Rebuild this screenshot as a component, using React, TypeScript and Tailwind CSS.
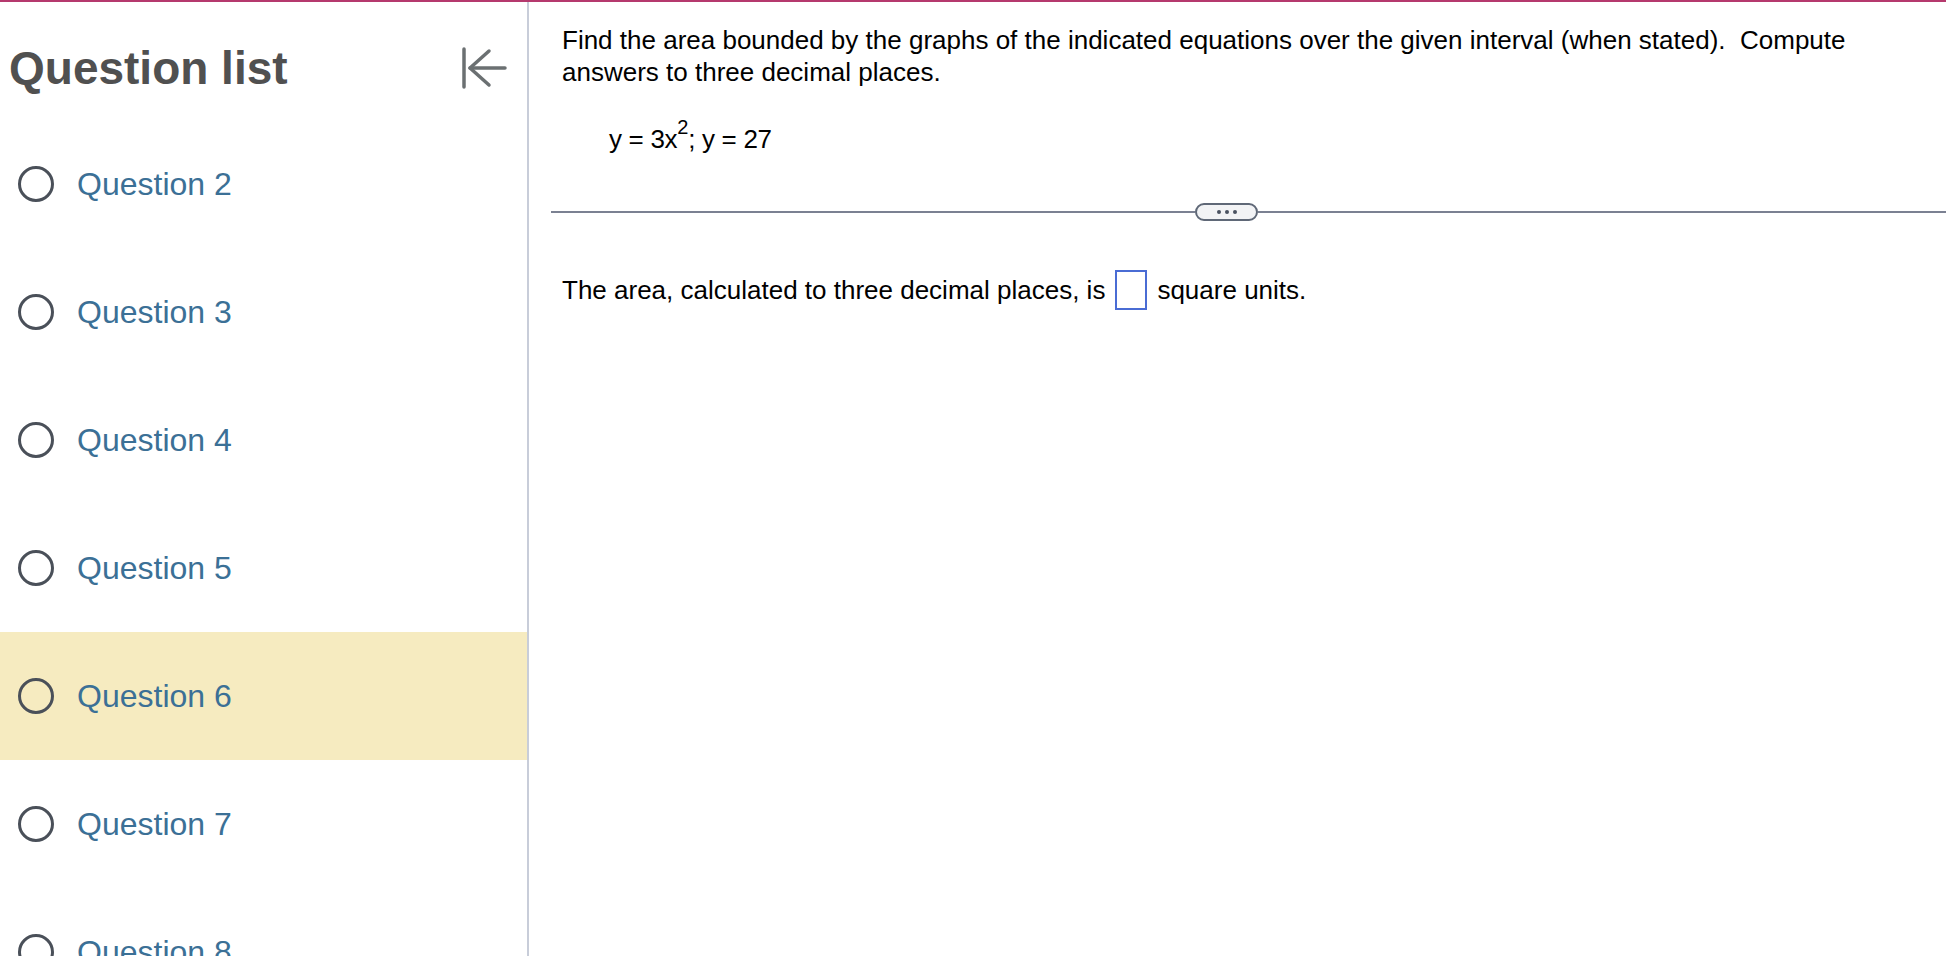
import React from "react";

const questions = [2, 3, 4, 5, 6, 7, 8];

function CollapseIcon() {
  return (
    <svg width="46" height="44" viewBox="0 0 46 44" fill="none" stroke="#6b7072" strokeWidth="3.5" strokeLinecap="round" strokeLinejoin="round">
      <line x1="3" y1="3" x2="3" y2="41" />
      <line x1="9" y1="22" x2="44" y2="22" />
      <polyline points="28,5 9,22 28,39" />
    </svg>
  );
}

export default function App() {
  return (
    <div className="flex h-[956px] w-[1946px] flex-col overflow-hidden bg-white" style={{ fontFamily: "'Liberation Sans', Arial, sans-serif" }}>
      <div className="h-[2px] shrink-0 bg-[#b5396d]" />
      <div className="flex min-h-0 flex-1">
        <aside className="w-[529px] shrink-0 overflow-hidden border-r-2 border-[#c8cdd9]">
          <div className="flex h-[118px] items-center justify-between pl-[9px] pr-[20px] pt-[14px]">
            <h1 className="text-[46px] font-bold text-[#505050]">Question list</h1>
            <button className="flex items-center">
              <CollapseIcon />
            </button>
          </div>
          {questions.map((q) => (
            <div key={q} className={`flex h-[128px] shrink-0 items-center gap-[23px] pl-[18px] ${q === 6 ? "bg-[#f6ebc0]" : ""}`}>
              <span className="h-[36px] w-[36px] shrink-0 rounded-full border-[3px] border-[#4a5059]" />
              <span className="text-[32px] text-[#3b7096]">Question {q}</span>
            </div>
          ))}
        </aside>

        <main className="min-w-0 flex-1 pt-[22px] text-black">
          <div className="pl-[33px] pr-[80px] text-[26px] leading-[32px]">
            <p>
              Find the area bounded by the graphs of the indicated equations over the given interval (when stated).&nbsp; Compute
              <br />
              answers to three decimal places.
            </p>
            <p className="mt-[35px] pl-[47px] tracking-[-0.3px]">
              y = 3x<span className="relative -top-[14px] text-[20px]">2</span>; y = 27
            </p>
          </div>

          <div className="ml-[22px] mt-[46px] flex items-center">
            <div className="h-[2px] w-[644px] bg-[#7b8192]" />
            <div className="flex h-[18px] w-[63px] items-center justify-center gap-[4px] rounded-full border-2 border-[#5f6877] bg-[#f2f3f5]">
              <span className="h-[4px] w-[4px] rounded-full bg-[#4a5260]" />
              <span className="h-[4px] w-[4px] rounded-full bg-[#4a5260]" />
              <span className="h-[4px] w-[4px] rounded-full bg-[#4a5260]" />
            </div>
            <div className="h-[2px] flex-1 bg-[#7b8192]" />
          </div>

          <div className="mt-[49px] flex items-center pl-[33px] text-[26px] leading-[32px]">
            <span>The area, calculated to three decimal places, is</span>
            <span className="mx-[10px] h-[40px] w-[32px] border-2 border-[#4a6cd4]" />
            <span>square units.</span>
          </div>
        </main>
      </div>
    </div>
  );
}
